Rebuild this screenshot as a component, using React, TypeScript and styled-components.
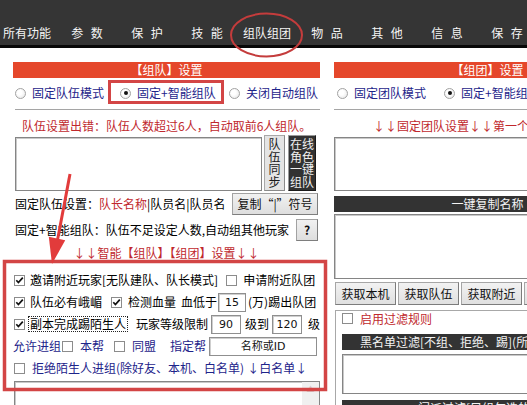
import React from "react";
import styled, { createGlobalStyle } from "styled-components";

const GlobalStyle = createGlobalStyle`
  html, body { margin: 0; padding: 0; background: #fff; }
  body { font-family: "Noto Sans CJK SC", "Noto Sans", sans-serif; font-size: 12px; }
  * { box-sizing: border-box; }
`;

const BLUE = "#1e248a";
const RED = "#c0282d";

const Screen = styled.div`
  position: relative;
  width: 527px;
  height: 405px;
  overflow: hidden;
  background: #fff;
  font-family: "Noto Sans CJK SC", "Liberation Sans", sans-serif;
  font-size: 12px;
  line-height: 16px;
  color: #000;
`;

const NavBar = styled.nav`
  height: 48px;
  padding-top: 20px;
  background: #353535;
  border-bottom: 3px solid #080808;
`;

const NavList = styled.div`
  display: flex;
  margin-left: -3px;
  height: 25px;
  align-items: center;
`;

const NavItem = styled.div`
  flex: none;
  width: 60px;
  text-align: center;
  color: #f4f4f4;
  font-size: 12px;
  word-spacing: 5px;
  white-space: nowrap;
`;

const Main = styled.main`
  display: flex;
  align-items: flex-start;
  gap: 14px;
  padding: 14px 0 0 13px;
`;

const Panel = styled.section`
  flex: none;
  width: 307px;
  display: flex;
  flex-direction: column;
`;

const PanelHeader = styled.div`
  height: 16px;
  line-height: 16px;
  background: #e5472b;
  color: #fff;
  text-align: center;
  white-space: nowrap;
`;

const RadioRow = styled.div<{ $pl: number }>`
  display: flex;
  align-items: center;
  height: 26px;
  margin-top: 2px;
  padding-left: ${(p) => p.$pl}px;
  white-space: nowrap;
`;

const RadioOption = styled.label<{ $w?: number }>`
  flex: none;
  display: flex;
  align-items: center;
  gap: 6px;
  width: ${(p) => (p.$w ? `${p.$w}px` : "auto")};
  color: ${BLUE};
`;

const RadioDot = styled.span<{ $on?: boolean }>`
  flex: none;
  width: 11px;
  height: 11px;
  border-radius: 50%;
  border: 1px solid #a3a3a3;
  background: radial-gradient(circle at 40% 40%, #ffffff 30%, #e2e2e2 100%);
  display: grid;
  place-items: center;
  &::after {
    content: "";
    width: 4px;
    height: 4px;
    border-radius: 50%;
    background: ${(p) => (p.$on ? "#111" : "transparent")};
  }
`;

const Rule = styled.div<{ $ml: number }>`
  height: 1px;
  margin: 3px 0 0 ${(p) => p.$ml}px;
  background: #a5a5a5;
`;

const NoteLine = styled.div<{ $pl?: number; $center?: boolean; $mt: number }>`
  height: 16px;
  margin-top: ${(p) => p.$mt}px;
  padding-left: ${(p) => p.$pl ?? 0}px;
  text-align: ${(p) => (p.$center ? "center" : "left")};
  color: ${RED};
  white-space: nowrap;
`;

const TextRow = styled.div`
  display: flex;
  height: 56px;
  margin-top: 1px;
`;

const ListBox = styled.div<{ $h: number; $mt: number; $ml?: number; $w?: number }>`
  flex: none;
  width: ${(p) => (p.$w ? `${p.$w}px` : "auto")};
  height: ${(p) => p.$h}px;
  margin-top: ${(p) => p.$mt}px;
  margin-left: ${(p) => p.$ml ?? 0}px;
  border: 1px solid #858585;
  box-shadow: inset 1px 1px 0 #c9c9c9;
  background: #fff;
  display: flex;
  justify-content: flex-end;
`;

const ScrollTrack = styled.div`
  width: 17px;
  background: #f0f0f0;
  color: #d8c8c8;
  font-size: 8px;
  line-height: 14px;
  text-align: center;
`;

const VButton = styled.div<{ $dark?: boolean; $w: number; $ml: number }>`
  flex: none;
  width: ${(p) => p.$w}px;
  margin-left: ${(p) => p.$ml}px;
  height: 56px;
  padding-top: 2px;
  background: ${(p) => (p.$dark ? "#323232" : "#e4e4e4")};
  color: ${(p) => (p.$dark ? "#f0f0f0" : "#1a1a1a")};
  border: 1px solid ${(p) => (p.$dark ? "#9a9a9a" : "#a8a8a8")};
  border-right-color: ${(p) => (p.$dark ? "#1a1a1a" : "#8a8a8a")};
  border-bottom-color: ${(p) => (p.$dark ? "#1a1a1a" : "#8a8a8a")};
  line-height: 12.5px;
  text-align: center;
  word-break: break-all;
`;

const FormRow = styled.div<{ $mt: number; $h?: number }>`
  display: flex;
  align-items: center;
  height: ${(p) => p.$h ?? 23}px;
  margin-top: ${(p) => p.$mt}px;
  padding: 0 2px 0 2px;
  white-space: nowrap;
`;

const PushButton = styled.button<{ $w: number; $bold?: boolean }>`
  flex: none;
  margin-left: auto;
  width: ${(p) => p.$w}px;
  height: 22px;
  padding: 0;
  font-family: inherit;
  font-size: 12px;
  font-weight: ${(p) => (p.$bold ? 700 : 400)};
  color: #111;
  background: linear-gradient(#f1f1f1, #dedede);
  border: 1px solid #a2a2a2;
  border-right-color: #7e7e7e;
  border-bottom-color: #7e7e7e;
  white-space: nowrap;
`;

const OptRow = styled.div<{ $pl?: number; $mt?: number }>`
  display: flex;
  align-items: center;
  height: 22px;
  margin-top: ${(p) => p.$mt ?? 0}px;
  padding-left: ${(p) => p.$pl ?? 1}px;
  padding-right: 2px;
  white-space: nowrap;
`;

const Txt = styled.span<{ $ml?: number; $c?: string }>`
  flex: none;
  margin-left: ${(p) => p.$ml ?? 0}px;
  color: ${(p) => p.$c ?? "inherit"};
`;

const FocusText = styled.span<{ $ml: number }>`
  flex: none;
  margin-left: ${(p) => p.$ml}px;
  padding: 0 1px;
  border: 1px dotted #222;
  line-height: 14px;
`;

const BoxWrap = styled.span<{ $ml?: number }>`
  flex: none;
  width: 11px;
  height: 11px;
  margin-left: ${(p) => p.$ml ?? 0}px;
  border: 1px solid #8c8c8c;
  background: #fff;
  display: grid;
  place-items: center;
`;

const Field = styled.div<{ $w: number; $ml: number }>`
  flex: none;
  width: ${(p) => p.$w}px;
  height: 19px;
  margin-left: ${(p) => p.$ml}px;
  border: 1px solid #8f8f8f;
  box-shadow: inset 1px 1px 0 #cfcfcf;
  background: #fff;
  text-align: center;
  line-height: 17px;
  color: #111;
  font-family: "DejaVu Sans", "Noto Sans CJK SC", sans-serif;
  font-size: 11px;
`;

const DarkBar = styled.div<{ $mt: number; $pl?: number; $center?: boolean }>`
  height: 16px;
  margin-top: ${(p) => p.$mt}px;
  padding-left: ${(p) => p.$pl ?? 0}px;
  background: #333333;
  color: #f4f4f4;
  line-height: 16px;
  text-align: ${(p) => (p.$center ? "center" : "left")};
  white-space: nowrap;
  overflow: hidden;
`;

const ButtonRow = styled.div`
  display: flex;
  gap: 2px;
  height: 23px;
  margin: 3px 0 0 1px;
`;

const GetButton = styled.button`
  flex: none;
  width: 61px;
  height: 23px;
  padding: 0;
  font-family: inherit;
  font-size: 12px;
  color: #111;
  background: linear-gradient(#f2f2f2, #e0e0e0);
  border: 1px solid #a6a6a6;
  border-right-color: #7c7c7c;
  border-bottom-color: #7c7c7c;
  white-space: nowrap;
`;

const GroupBox = styled.div`
  margin-top: 5px;
  margin-left: 1px;
  padding-left: 6px;
  border-top: 1px solid #a8a8a8;
  border-left: 1px solid #a8a8a8;
`;

const GroupTitle = styled.div`
  display: inline-flex;
  align-items: center;
  gap: 7px;
  height: 13px;
  margin-top: -1px;
  padding-right: 6px;
  background: #fff;
  color: ${RED};
  white-space: nowrap;
`;

const Overlay = styled.svg`
  position: absolute;
  left: 0;
  top: 0;
  width: 527px;
  height: 405px;
  pointer-events: none;
`;

function Check({ on, ml }: { on?: boolean; ml?: number }) {
  return (
    <BoxWrap $ml={ml}>
      {on && (
        <svg width="9" height="9" viewBox="0 0 9 9">
          <path d="M1.3 4.3 L3.4 6.6 L7.8 1.6" fill="none" stroke="#111" strokeWidth="1.7" />
        </svg>
      )}
    </BoxWrap>
  );
}

const NAV = ["所有功能", "参 数", "保 护", "技 能", "组队组团", "物 品", "其 他", "信 息", "保 存"];

export default function App() {
  return (
    <>
      <GlobalStyle />
      <Screen>
        <NavBar>
          <NavList>
            {NAV.map((n) => (
              <NavItem key={n}>{n}</NavItem>
            ))}
          </NavList>
        </NavBar>
        <Main>
          <Panel>
            <PanelHeader>【组队】设置</PanelHeader>
            <RadioRow $pl={2}>
              <RadioOption $w={105}>
                <RadioDot />
                固定队伍模式
              </RadioOption>
              <RadioOption $w={109}>
                <RadioDot $on />
                固定+智能组队
              </RadioOption>
              <RadioOption>
                <RadioDot />
                关闭自动组队
              </RadioOption>
            </RadioRow>
            <Rule $ml={2} />
            <NoteLine $mt={8} $pl={9}>
              队伍设置出错：队伍人数超过6人，自动取前6人组队。
            </NoteLine>
            <TextRow>
              <ListBox $h={54} $mt={2} $ml={2} $w={247} />
              <VButton $w={21} $ml={2}>
                队伍同步
              </VButton>
              <VButton $w={28} $ml={3} $dark>
                在线角色一键组队
              </VButton>
            </TextRow>
            <FormRow $mt={1}>
              <Txt>固定队伍设置：</Txt>
              <Txt $c={RED}>队长名称</Txt>
              <Txt>|队员名|队员名</Txt>
              <PushButton $w={86}>复制“|”符号</PushButton>
            </FormRow>
            <FormRow $mt={3}>
              <Txt>固定+智能组队：队伍不足设定人数,自动组其他玩家</Txt>
              <PushButton $w={22} $bold>
                ?
              </PushButton>
            </FormRow>
            <NoteLine $mt={4} $center>
              ↓↓智能【组队】【组团】设置↓↓
            </NoteLine>
            <OptRow $mt={8}>
              <Check on />
              <Txt $ml={5}>邀请附近玩家[无队建队、队长模式]</Txt>
              <Check ml={8} />
              <Txt $ml={6}>申请附近队团</Txt>
            </OptRow>
            <OptRow>
              <Check on />
              <Txt $ml={5}>队伍必有峨嵋</Txt>
              <Check on ml={9} />
              <Txt $ml={6}>检测血量</Txt>
              <Txt $ml={5}>血低于</Txt>
              <Field $w={28} $ml={1}>15</Field>
              <Txt $ml={2}>(万)踢出队团</Txt>
            </OptRow>
            <OptRow>
              <Check on />
              <FocusText $ml={3}>副本完成踢陌生人</FocusText>
              <Txt $ml={8}>玩家等级限制</Txt>
              <Field $w={30} $ml={3}>90</Field>
              <Txt $ml={4}>级到</Txt>
              <Field $w={30} $ml={3}>120</Field>
              <Txt $ml={6}>级</Txt>
            </OptRow>
            <OptRow $pl={0}>
              <Txt $c={BLUE}>允许进组</Txt>
              <Check ml={1} />
              <Txt $ml={7} $c={BLUE}>本帮</Txt>
              <Check ml={10} />
              <Txt $ml={7} $c={BLUE}>同盟</Txt>
              <Txt $ml={14} $c={BLUE}>指定帮</Txt>
              <Field $w={108} $ml={3}>名称或ID</Field>
            </OptRow>
            <OptRow>
              <Check />
              <Txt $ml={7} $c={BLUE}>拒绝陌生人进组(除好友、本机、白名单)</Txt>
              <Txt $ml={3} $c={BLUE}>↓白名单↓</Txt>
            </OptRow>
            <ListBox $h={60} $mt={2} $ml={1}>
              <ScrollTrack>▲</ScrollTrack>
            </ListBox>
          </Panel>

          <Panel>
            <PanelHeader>【组团】设置</PanelHeader>
            <RadioRow $pl={3}>
              <RadioOption $w={107}>
                <RadioDot />
                固定团队模式
              </RadioOption>
              <RadioOption>
                <RadioDot $on />
                固定+智能组团
              </RadioOption>
            </RadioRow>
            <Rule $ml={0} />
            <NoteLine $mt={8} $pl={39}>
              ↓↓固定团队设置↓↓第一个为团长↓↓
            </NoteLine>
            <ListBox $h={54} $mt={3} />
            <DarkBar $mt={5} $center>
              一键复制名称
            </DarkBar>
            <ListBox $h={65} $mt={2} />
            <ButtonRow>
              <GetButton>获取本机</GetButton>
              <GetButton>获取队伍</GetButton>
              <GetButton>获取附近</GetButton>
              <GetButton>清空名单</GetButton>
            </ButtonRow>
            <GroupBox>
              <GroupTitle>
                <Check />
                启用过滤规则
              </GroupTitle>
              <DarkBar $mt={7} $pl={18}>
                黑名单过滤[不组、拒绝、踢](所有模式有效)
              </DarkBar>
              <ListBox $h={40} $mt={4} />
              <DarkBar $mt={6} $pl={76}>
                门派过滤[只组勾选的门派]
              </DarkBar>
            </GroupBox>
          </Panel>
        </Main>

        <Overlay viewBox="0 0 527 405">
          <ellipse cx="266.5" cy="35" rx="35.5" ry="21.5" fill="none" stroke="#c43c3c" strokeWidth="2" />
          <rect x="109.5" y="81.5" width="113" height="21" fill="none" stroke="#d34545" strokeWidth="3" />
          <rect x="4.5" y="261.5" width="321" height="128" fill="none" stroke="#d34545" strokeWidth="3.5" />
          <line x1="70" y1="174" x2="57.5" y2="240" stroke="#e23b3b" strokeWidth="3" />
          <polygon points="52,264 48.8,236.8 65.2,240.2" fill="#e23b3b" />
        </Overlay>
      </Screen>
    </>
  );
}
